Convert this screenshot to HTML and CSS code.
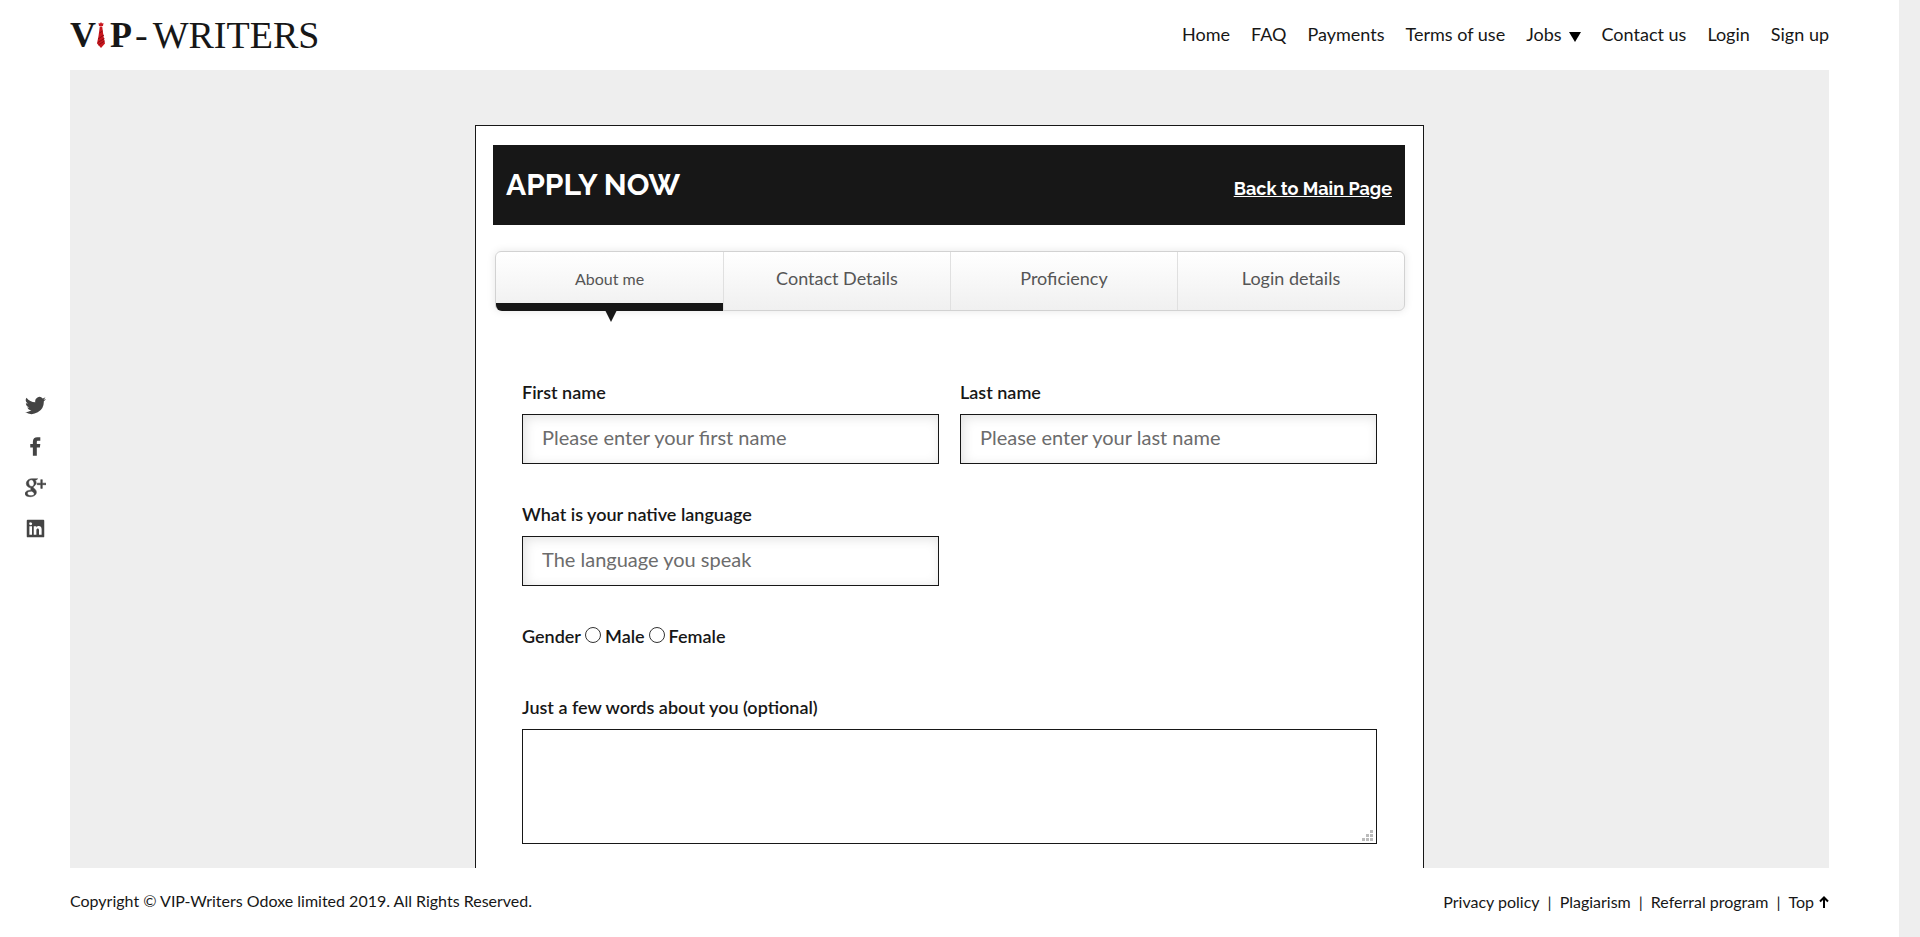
FILE: index.html
```html
<!DOCTYPE html>
<html lang="en">
<head>
<meta charset="utf-8">
<title>VIP-Writers - Apply now</title>
<link rel="stylesheet" href="styles.css">
</head>
<body>
<div class="page">
  <header class="header">
    <a class="logo" href="#" aria-label="VIP-Writers"><b class="vip">V</b><svg class="tie" viewBox="0 0 8 26" aria-hidden="true"><path fill="#c8171e" d="M1.500 1L3 1.500 4 0l1 1.500L6.500 1 6 4H2zM2.800 4.500h2.400L6.500 14 8 21.500 4 26 0 21.500 1.500 14z"/><path stroke="#8d0c12" d="M1 17l6-4M.8 20.500l6.600-4M1.500 23l6-4M2.500 11l3-2" fill="none"/></svg><b class="vip">P</b><span class="dash">-</span><span>WRITERS</span></a>
    <nav class="nav">
      <a href="#">Home</a>
      <a href="#">FAQ</a>
      <a href="#">Payments</a>
      <a href="#">Terms of use</a>
      <a class="nav-drop" href="#">Jobs<svg class="caret" viewBox="0 0 12 10" aria-hidden="true"><path d="M0 0h12L6 10z"/></svg></a>
      <a href="#">Contact us</a>
      <a href="#">Login</a>
      <a href="#">Sign up</a>
    </nav>
  </header>

  <div class="middle">
    <aside class="social">
      <a href="#" aria-label="Twitter"><svg viewBox="0 0 24 24"><path d="M24 4.600a10 10 0 0 1-2.800.8 5 5 0 0 0 2.100-2.700 10 10 0 0 1-3.100 1.200 4.900 4.900 0 0 0-8.400 4.500A14 14 0 0 1 1.700 3.100a4.900 4.900 0 0 0 1.500 6.600 5 5 0 0 1-2.200-.6v.1a4.900 4.900 0 0 0 3.900 4.800 5 5 0 0 1-2.200.1 4.900 4.900 0 0 0 4.600 3.400A9.900 9.900 0 0 1 0 19.500 14 14 0 0 0 21.500 7.100 10 10 0 0 0 24 4.600z"/></svg></a>
      <a href="#" aria-label="Facebook"><svg viewBox="0 0 24 24"><path d="M9 22.500V13H6V9h3V6.500C9 3 11 1.500 14 1.500h3.500v4H15c-1.200 0-1.500.5-1.500 1.500v2h4l-.5 4h-3.500v9.500z"/></svg></a>
      <a href="#" aria-label="Google Plus"><svg viewBox="0 0 24 24"><path fill-rule="evenodd" stroke="#444" stroke-width=".6" d="M14.500 2H8C4 2 1.500 4.500 1.500 7.500S4 12.300 7 12.300c-.8 1-.6 1.900.2 2.700C3 15 0 16.500 0 19c0 2.200 2.500 3.500 6 3.500 4.500 0 7-2.300 7-5 0-2-1-3.200-2.700-4.500-1.300-1-1.200-1.600 0-2.500C12 9.300 12.800 8 12.800 6.500c0-1.300-.6-2.400-1.400-3.200h1.600zM7.300 3.200c1.700 0 3 2 3 4.300 0 2-.9 3.300-2.600 3.300C5.800 10.800 4.200 9 4.200 6.600c0-2 1.200-3.400 3.100-3.400zM7.700 16.200c2 1.300 2.800 1.800 2.800 3 0 1.300-1.200 2.200-3.600 2.200-2.600 0-4.200-1.100-4.200-2.700 0-1.700 1.800-2.600 5-2.500zM18 3h1.800v4H24v1.800h-4.200V13H18V8.800h-4V7h4z"/></svg></a>
      <a href="#" aria-label="LinkedIn"><svg viewBox="0 0 24 24"><path fill-rule="evenodd" d="M3 2h18a1 1 0 0 1 1 1v18a1 1 0 0 1-1 1H3a1 1 0 0 1-1-1V3a1 1 0 0 1 1-1zM5 9.500V19h3V9.500zM6.500 5a1.700 1.700 0 1 0 0 3.400 1.700 1.700 0 0 0 0-3.400zM10 9.500V19h3v-5c0-2.600 3-2.700 3 0v5h3v-6c0-4.500-4.500-4.500-6-2.200V9.500z"/></svg></a>
    </aside>

    <main class="main">
      <section class="card">
        <div class="card-head">
          <h1 class="title">APPLY NOW</h1>
          <a class="back" href="#">Back to Main Page</a>
        </div>

        <div class="tabs" role="tablist">
          <button class="tab tab-active" type="button" role="tab" aria-selected="true">About me</button>
          <button class="tab" type="button" role="tab">Contact Details</button>
          <button class="tab" type="button" role="tab">Proficiency</button>
          <button class="tab" type="button" role="tab">Login details</button>
        </div>

        <form class="form">
          <div class="field">
            <label class="label" for="first">First name</label>
            <input class="input" id="first" type="text" placeholder="Please enter your first name">
          </div>
          <div class="field">
            <label class="label" for="last">Last name</label>
            <input class="input" id="last" type="text" placeholder="Please enter your last name">
          </div>
          <div class="field field-left">
            <label class="label" for="lang">What is your native language</label>
            <input class="input" id="lang" type="text" placeholder="The language you speak">
          </div>
          <div class="field-wide gender" role="radiogroup" aria-labelledby="gender">
            <span id="gender">Gender</span>
            <input class="radio" type="radio" name="gender" id="male"><label for="male">Male</label>
            <input class="radio" type="radio" name="gender" id="female"><label for="female">Female</label>
          </div>
          <div class="field field-wide">
            <label class="label" for="about">Just a few words about you (optional)</label>
            <div class="area-wrap">
              <textarea class="area" id="about"></textarea>
              <svg class="grip" viewBox="0 0 11 11" aria-hidden="true"><path d="M8 0h3v3H8zM4 4h3v3H4zM8 4h3v3H8zM0 8h3v3H0zM4 8h3v3H4zM8 8h3v3H8z"/></svg>
            </div>
          </div>
        </form>
      </section>
    </main>
  </div>

  <footer class="footer">
    <p class="copy">Copyright © VIP-Writers Odoxe limited 2019. All Rights Reserved.</p>
    <nav class="foot-nav">
      <a href="#">Privacy policy</a><span>|</span>
      <a href="#">Plagiarism</a><span>|</span>
      <a href="#">Referral program</a><span>|</span>
      <a class="top" href="#">Top<svg class="arrow" viewBox="0 0 10 12" aria-hidden="true"><path d="M5 12V2M1 5.500L5 1.500l4 4" fill="none" stroke="#000" stroke-width="2"/></svg></a>
    </nav>
  </footer>
</div>
</body>
</html>
```

FILE: styles.css
```css
* {
  box-sizing: border-box;
}

body {
  margin: 0;
  background: #eee;
  color: #171717;
  font-family: Lato, "Open Sans", sans-serif;
  font-size: 16px;
}

a {
  color: inherit;
  text-decoration: none;
}

.page {
  display: grid;
  grid-template-rows: 70px minmax(0, 1fr) 69px;
  height: 100vh;
  margin-right: 21px;
  background: #fff;
}

.header {
  display: flex;
  align-items: center;
  justify-content: space-between;
  padding: 0 70px;
}

.logo {
  display: flex;
  align-items: center;
  font-family: "Liberation Serif", "Times New Roman", serif;
  font-size: 38px;
  font-kerning: none;
  line-height: 40px;
}

.vip {
  font-size: 36px;
}

.tie {
  width: 8px;
  height: 26px;
  margin: 0 5px 0 1px;
}

.dash {
  margin: 0 5px 0 3px;
}

.nav {
  display: flex;
  gap: 21px;
  padding-bottom: 2px;
  font-size: 18px;
  line-height: 24px;
}

.nav-drop {
  display: flex;
  align-items: center;
  gap: 7px;
}

.caret {
  width: 12px;
  height: 10px;
  margin-top: 6px;
  fill: #000;
}

.middle {
  display: grid;
  grid-template-columns: 70px minmax(0, 1fr);
  padding-right: 70px;
}

.social {
  display: flex;
  flex-direction: column;
  align-items: center;
  justify-content: center;
  gap: 20px;
  padding-bottom: 4px;
}

.social a {
  display: flex;
}

.social svg {
  width: 21px;
  height: 21px;
  fill: #444;
}

.main {
  overflow: hidden;
  padding: 55px 24px 0;
  background: #eee;
}

.card {
  max-width: 949px;
  min-height: 100%;
  margin: 0 auto;
  padding: 19px 18px 60px 17px;
  border: 1px solid #171717;
  background: #fff;
}

.card-head {
  display: flex;
  align-items: center;
  justify-content: space-between;
  height: 80px;
  padding: 0 13px;
  background: #171717;
  color: #fff;
  font-family: Raleway, Lato, sans-serif;
}

.title {
  margin: 0;
  font-size: 30px;
  line-height: 36px;
}

.back {
  padding-top: 8px;
  font-size: 18px;
  font-weight: 700;
  line-height: 24px;
  text-decoration: underline;
}

.tabs {
  display: grid;
  grid-template-columns: repeat(4, 1fr);
  height: 60px;
  margin: 26px 0 0 2px;
  border: 1px solid #d2d2d2;
  border-radius: 6px;
  background: linear-gradient(#fff, #f0f0f0);
  box-shadow: 0 0 8px rgba(0, 0, 0, 0.1);
}

.tab {
  position: relative;
  padding: 0 0 6px;
  border: 0;
  background: none;
  color: #555;
  font-family: inherit;
  font-size: 18px;
}

.tab + .tab {
  border-left: 1px solid #e0e0e0;
}

.tab-active {
  font-size: 16px;
}

.tab-active::before {
  content: "";
  position: absolute;
  right: 0;
  bottom: -1px;
  left: 0;
  height: 8px;
  border-bottom-left-radius: 6px;
  background: #171717;
}

.tab-active::after {
  content: "";
  position: absolute;
  top: 100%;
  left: 50%;
  margin-left: -5px;
  border: 6px solid transparent;
  border-top: 12px solid #171717;
  border-bottom: 0;
}

.form {
  display: grid;
  grid-template-columns: 1fr 1fr;
  column-gap: 21px;
  padding: 69px 28px 0 29px;
  font-size: 18px;
  font-weight: 600;
  line-height: 24px;
}

.field {
  display: grid;
  gap: 10px;
  margin-bottom: 38px;
}

.field-left {
  grid-column: 1;
}

.field-wide {
  grid-column: 1 / -1;
}

.input {
  width: 100%;
  height: 50px;
  padding: 0 19px 4px;
  border: 1px solid #171717;
  background: #fff;
  box-shadow: inset 2px 2px 12px rgba(0, 0, 0, 0.12);
  color: #171717;
  font-family: inherit;
  font-size: 20px;
}

.input::placeholder {
  color: #6c6c6c;
  opacity: 1;
}

.gender {
  display: flex;
  align-items: center;
  gap: 4px;
  margin-bottom: 47px;
}

.radio {
  width: 16px;
  height: 16px;
  margin: 0 0 3px;
  border: 1px solid #333;
  border-radius: 50%;
  appearance: none;
  background: #fff;
}

.radio:checked {
  background: radial-gradient(#171717 50%, #fff 55%);
}

.area-wrap {
  position: relative;
}

.area {
  display: block;
  width: 100%;
  height: 115px;
  padding: 12px 19px;
  border: 1px solid #171717;
  background: #fff;
  font-family: inherit;
  font-size: 20px;
  resize: none;
}

.grip {
  position: absolute;
  right: 4px;
  bottom: 3px;
  width: 11px;
  height: 11px;
  fill: #bbb;
}

.footer {
  display: flex;
  align-items: center;
  justify-content: space-between;
  padding: 0 70px 4px;
  line-height: 20px;
}

.copy {
  margin: 0;
}

.foot-nav {
  display: flex;
  gap: 8px;
  padding-top: 2px;
}

.top {
  display: flex;
  align-items: center;
  gap: 5px;
}

.arrow {
  width: 10px;
  height: 12px;
}
```
